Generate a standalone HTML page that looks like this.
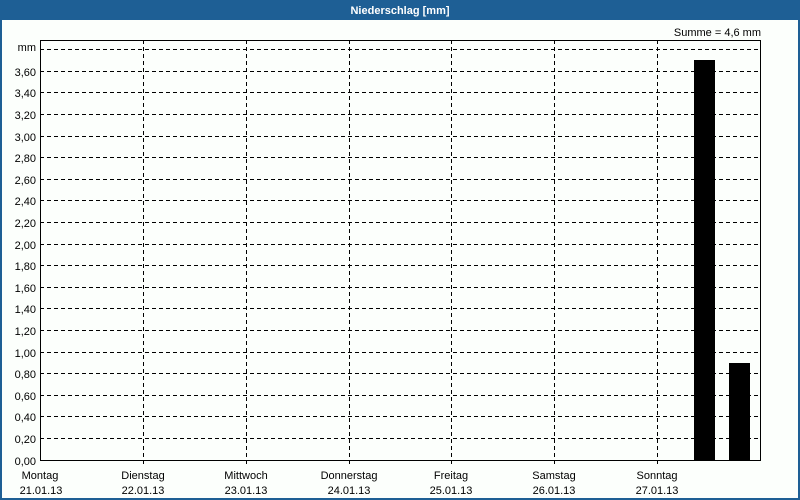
<!DOCTYPE html>
<html><head><meta charset="utf-8"><style>
html,body{margin:0;padding:0;background:#fcfffc}
svg{display:block}
text{font-family:"Liberation Sans",sans-serif;font-size:11px;fill:#000}
</style></head><body>
<svg width="800" height="500" xmlns="http://www.w3.org/2000/svg">
<rect x="0" y="0" width="800" height="500" fill="#1e5f95"/>
<rect x="2" y="20" width="796" height="478" fill="#fcfffc"/>
<text x="400" y="14" text-anchor="middle" style="font-weight:bold;fill:#fff">Niederschlag [mm]</text>
<text x="761" y="36" text-anchor="end">Summe = 4,6 mm</text>
<text x="36" y="51" text-anchor="end">mm</text>
<g stroke="#000" stroke-width="1" stroke-dasharray="4,3" fill="none">
<path d="M40 49.5H760M40 71.5H760M40 92.5H760M40 114.5H760M40 136.5H760M40 157.5H760M40 179.5H760M40 200.5H760M40 222.5H760M40 244.5H760M40 265.5H760M40 287.5H760M40 308.5H760M40 330.5H760M40 352.5H760M40 373.5H760M40 395.5H760M40 416.5H760M40 438.5H760"/>
<path d="M143.5 40V460M246.5 40V460M349.5 40V460M451.5 40V460M554.5 40V460M657.5 40V460"/>
</g>
<g fill="#000">
<rect x="694" y="60" width="21" height="400"/>
<rect x="729" y="363" width="21" height="97"/>
</g>
<path d="M40.5 40.5H760.5V460.5H40.5Z" stroke="#000" fill="none"/>
<path d="M143.5 460V464M246.5 460V464M349.5 460V464M451.5 460V464M554.5 460V464M657.5 460V464" stroke="#000"/>
<g text-anchor="end">
<text x="36" y="76">3,60</text><text x="36" y="97">3,40</text><text x="36" y="119">3,20</text><text x="36" y="141">3,00</text><text x="36" y="162">2,80</text><text x="36" y="184">2,60</text><text x="36" y="205">2,40</text><text x="36" y="227">2,20</text><text x="36" y="249">2,00</text><text x="36" y="270">1,80</text><text x="36" y="292">1,60</text><text x="36" y="313">1,40</text><text x="36" y="335">1,20</text><text x="36" y="357">1,00</text><text x="36" y="378">0,80</text><text x="36" y="400">0,60</text><text x="36" y="421">0,40</text><text x="36" y="443">0,20</text><text x="36" y="465">0,00</text>
</g>
<g text-anchor="middle">
<text x="40" y="479">Montag</text><text x="41" y="494">21.01.13</text>
<text x="143" y="479">Dienstag</text><text x="143" y="494">22.01.13</text>
<text x="246" y="479">Mittwoch</text><text x="246" y="494">23.01.13</text>
<text x="349" y="479">Donnerstag</text><text x="349" y="494">24.01.13</text>
<text x="451" y="479">Freitag</text><text x="451" y="494">25.01.13</text>
<text x="554" y="479">Samstag</text><text x="554" y="494">26.01.13</text>
<text x="657" y="479">Sonntag</text><text x="657" y="494">27.01.13</text>
</g>
</svg>
</body></html>
